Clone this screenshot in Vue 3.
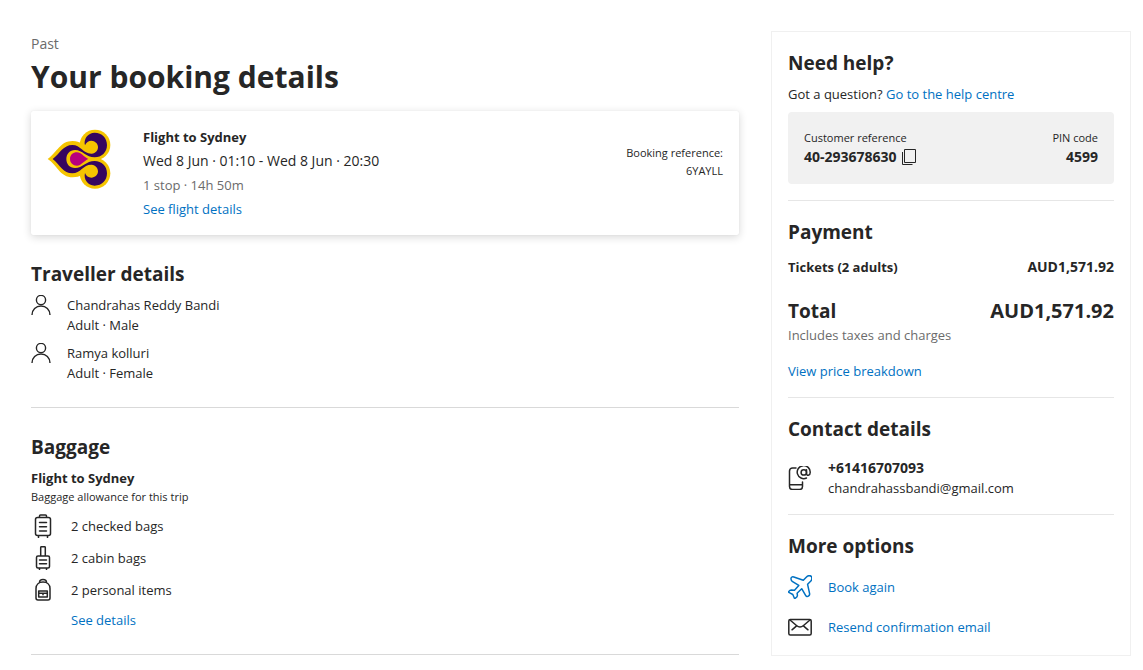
<template>
    <div class="page">
        <main class="main">
            <p class="muted status">Past</p>
            <h1>Your booking details</h1>

            <section class="flight-card">
                <svg class="airline" viewBox="21 21 192 192" aria-hidden="true">
                    <g fill="#f5c400">
                        <path d="M23 117C52 97 60 63 98 63c12 0 20 3 26 7h50v96h-50c-6 4-14 6-26 6-38 0-46-36-75-55z" />
                        <circle cx="165" cy="75" r="46" />
                        <circle cx="165" cy="160" r="46" />
                    </g>
                    <path
                        fill="#35055f"
                        d="M38 117C60 100 70 75 97 75c25 0 33 27 58 26 12-1 19-10 19-20s-9-19-20-19c-8 0-16 5-19 14-5-18 8-38 29-38 22 0 37 16 37 37 0 22-16 37-37 37-26 0-36-22-59-22-16 0-26 12-26 27s10 27 26 27c23 0 33-21 59-21 21 0 37 15 37 37 0 21-15 37-37 37-21 0-34-20-29-38 3 9 11 14 19 14 11 0 20-9 20-19s-7-19-19-20c-25-1-33 26-58 26-27 0-37-25-59-43z"
                    />
                    <path fill="#b8007d" d="M90 117c0-12 9-20 21-20 13 0 20 14 34 20-14 6-21 20-34 20-12 0-21-8-21-20z" />
                </svg>
                <div class="flight-info">
                    <h3>Flight to Sydney</h3>
                    <p class="number">Wed 8 Jun · 01:10 - Wed 8 Jun · 20:30</p>
                    <p class="muted">1 stop · 14h 50m</p>
                    <a href="#">See flight details</a>
                </div>
                <div class="booking-ref small">
                    <div>Booking reference:</div>
                    <div>6YAYLL</div>
                </div>
            </section>

            <section class="travellers">
                <h2>Traveller details</h2>
                <ul>
                    <li v-for="person in travellers" :key="person.name">
                        <svg class="person" viewBox="0 0 20 20" aria-hidden="true">
                            <circle cx="10" cy="5" r="4.6" />
                            <path d="M1 20c0-5.500 4-9 9-9s9 3.500 9 9" />
                        </svg>
                        <div>
                            <div>{{ person.name }}</div>
                            <div>{{ person.type }} · {{ person.gender }}</div>
                        </div>
                    </li>
                </ul>
            </section>

            <section class="baggage">
                <h2>Baggage</h2>
                <h3>Flight to Sydney</h3>
                <p class="small">Baggage allowance for this trip</p>
                <ul>
                    <li v-for="bag in bags" :key="bag.label">
                        <svg class="icon" viewBox="0 0 24 24" aria-hidden="true">
                            <path :d="bag.icon" />
                        </svg>
                        <span>{{ bag.label }}</span>
                    </li>
                </ul>
                <a class="bag-link" href="#">See details</a>
            </section>
        </main>

        <aside class="sidebar">
            <section>
                <h2>Need help?</h2>
                <p class="question">Got a question? <a href="#">Go to the help centre</a></p>
                <div class="reference-box">
                    <div>
                        <div class="small">Customer reference</div>
                        <div class="customer-number">
                            <strong class="number">40-293678630</strong>
                            <button type="button" aria-label="Copy customer reference">
                                <svg class="copy" viewBox="0 0 14 16" aria-hidden="true">
                                    <path d="M2.500.5h11v13h-11zM.5 3v12.500h10" />
                                </svg>
                            </button>
                        </div>
                    </div>
                    <div class="pin">
                        <div class="small">PIN code</div>
                        <strong class="number">4599</strong>
                    </div>
                </div>
            </section>

            <section>
                <h2>Payment</h2>
                <div class="price-row tickets">
                    <strong>Tickets (2 adults)</strong>
                    <strong class="number">AUD1,571.92</strong>
                </div>
                <div class="price-row total">
                    <strong>Total</strong>
                    <strong class="total-amount">AUD1,571.92</strong>
                </div>
                <p class="muted">Includes taxes and charges</p>
                <a class="breakdown" href="#">View price breakdown</a>
            </section>

            <section>
                <h2>Contact details</h2>
                <div class="contact">
                    <svg class="icon" viewBox="0 0 24 24" aria-hidden="true">
                        <path d="M8 2H4.500a3 3 0 0 0-3 3v15.500a3 3 0 0 0 3 3h7a3 3 0 0 0 3-3V16M1.500 18.700h13" />
                        <path d="M18.500 12a6.500 6.500 0 1 1 3.700-5.500c0 3.300-3.700 3.800-3.700 1V3.800" />
                        <circle cx="15.800" cy="6.400" r="2.700" />
                    </svg>
                    <div>
                        <strong class="number">+61416707093</strong>
                        <div>chandrahassbandi@gmail.com</div>
                    </div>
                </div>
            </section>

            <section>
                <h2>More options</h2>
                <ul class="options">
                    <li>
                        <svg class="icon icon-blue" viewBox="0 0 24 24" aria-hidden="true">
                            <path d="M18.500 1.900 15.300 5.200 5.800 2C4 1.500 2.800 2.500 3 4c.1 1 .4 1.800 1.200 2.300l6.600 4.100-4.300 4.900-3.300-.3c-1 0-1.700.5-2.300 1.400-.4.700-.2 1 .4 1.300l3.500 1.800 1.400 3.300c.3.600.7.800 1.200.4 1.400-.9 2.200-1.600 2-3l-.3-2 4.600-4.500 3.900 6.600c.7 1.200 1.700 1.500 2.800.8 1-.6 1.400-1.400 1.200-2.500l-2-9.300 3-3c1.400-1.500 1.300-3.800.7-4.900-1-1.100-3.300-1.100-4.800.5z" />
                        </svg>
                        <a href="#">Book again</a>
                    </li>
                    <li>
                        <svg class="icon" viewBox="0 0 24 24" aria-hidden="true">
                            <rect x=".8" y="4.500" width="22.400" height="15.500" rx="1.500" />
                            <path d="m2 5 6.500 5.500c2 1.700 5 1.700 7 0L22 5M4 14.800l4.300-3.600M20 14.800l-4.300-3.600" />
                        </svg>
                        <a href="#">Resend confirmation email</a>
                    </li>
                </ul>
            </section>
        </aside>
    </div>
</template>

<script setup>
const travellers = [
    { name: 'Chandrahas Reddy Bandi', type: 'Adult', gender: 'Male' },
    { name: 'Ramya kolluri',          type: 'Adult', gender: 'Female' },
];

const bags = [
    {
        label: '2 checked bags',
        icon: 'M6.500 3.500h11a2 2 0 0 1 2 2v14a2 2 0 0 1-2 2h-11a2 2 0 0 1-2-2v-14a2 2 0 0 1 2-2zM8.500 3.500V2a1 1 0 0 1 1-1h5a1 1 0 0 1 1 1v1.500M8.500 8.500h7M8.500 12.800h7M8.500 17h7M7.500 21.500v2M16.500 21.500v2',
    },
    {
        label: '2 cabin bags',
        icon: 'M7 10h10a1.500 1.500 0 0 1 1.500 1.500v9A1.500 1.500 0 0 1 17 22H7a1.500 1.500 0 0 1-1.500-1.500v-9A1.500 1.500 0 0 1 7 10zM9.700 10V1.500a.8.800 0 0 1 .8-.8h3a.8.800 0 0 1 .8.800V10M8.500 14h7M8.500 17.800h7M8.500 22v1.500M15.500 22v1.500',
    },
    {
        label: '2 personal items',
        icon: 'M5 10.500C5 6.500 8 4 12 4s7 2.500 7 6.500v9.500a2 2 0 0 1-2 2H7a2 2 0 0 1-2-2zM8.500 4.500C8.500 2.500 10 1.500 12 1.500s3.500 1 3.500 3M7.700 13h8.600v6H7.700zM8 15.300h8M12 15.300v1.500',
    },
];
</script>

<style>
body {
    margin: 0;
    background: #fff;
}
</style>

<style scoped>
.page {
    display: grid;
    grid-template-columns: minmax(0, 1fr) 360px;
    align-items: start;
    gap: 32px;
    max-width: 1100px;
    margin: 0 auto;
    padding: 31px 12px 14px 31px;
    color: #262626;
    font-family: "Segoe UI", "Open Sans", "Noto Sans", sans-serif;
    font-size: 13px;
    line-height: 20px;
}
h1, h2, h3, p, ul {
    margin: 0;
    padding: 0;
}
ul { list-style: none; }
h1 {
    margin: 3px 0 14px;
    font-size: 30px;
    line-height: 40px;
    font-weight: 700;
}
h2 {
    font-size: 19px;
    line-height: 28px;
    font-weight: 700;
}
h3 {
    font-size: 13px;
    line-height: 20px;
    font-weight: 700;
}
a {
    color: #0071c2;
    text-decoration: none;
}
strong { font-weight: 700; }
.muted { color: #6b6b6b; }
.small {
    font-size: 11px;
    line-height: 18px;
}
.number { font-size: 14px; }
.status {
    padding-top: 3px;
    font-size: 14px;
}
.icon {
    flex: none;
    width: 24px;
    height: 24px;
    fill: none;
    stroke: #262626;
    stroke-width: 1.5;
    stroke-linecap: round;
    stroke-linejoin: round;
}
.icon-blue { stroke: #0071c2; }

.flight-card {
    display: flex;
    align-items: flex-start;
    padding: 16px;
    border-radius: 2px;
    box-shadow: 0 2px 8px rgba(0, 0, 0, .16), 0 0 1px rgba(0, 0, 0, .1);
}
.airline {
    flex: none;
    width: 64px;
    height: 64px;
    margin-right: 32px;
}
.flight-info {
    display: flex;
    flex: 1;
    flex-direction: column;
    align-items: flex-start;
    gap: 4px;
}
.booking-ref {
    padding-top: 17px;
    text-align: right;
}

.travellers {
    padding: 25px 0 24px;
    border-bottom: 1px solid #d9d9d9;
}
.travellers ul {
    display: grid;
    gap: 8px;
    padding-top: 7px;
}
.travellers li {
    display: flex;
    gap: 16px;
}
.person {
    flex: none;
    width: 20px;
    height: 20px;
    fill: none;
    stroke: #262626;
    stroke-width: 1.4;
}

.baggage {
    padding: 25px 0 24px;
    border-bottom: 1px solid #d9d9d9;
}
.baggage h3 { margin-top: 7px; }
.baggage ul {
    display: grid;
    gap: 8px;
    padding: 8px 0;
}
.baggage li {
    display: flex;
    align-items: center;
    gap: 16px;
}
.bag-link {
    display: block;
    margin-left: 40px;
}

.sidebar {
    padding: 0 16px;
    border: 1px solid #f0f0f0;
}
.sidebar section { padding: 17px 0 16px; }
.sidebar section + section { border-top: 1px solid #e6e6e6; }
.question { margin: 7px 0 8px; }
.reference-box {
    display: flex;
    justify-content: space-between;
    padding: 17px 16px;
    border-radius: 4px;
    background: #f1f1f1;
}
.customer-number {
    display: flex;
    align-items: center;
    gap: 5px;
}
.customer-number button {
    display: flex;
    padding: 0;
    border: 0;
    background: none;
    cursor: pointer;
}
.copy {
    width: 14px;
    height: 16px;
    fill: none;
    stroke: #262626;
}
.pin { text-align: right; }

.price-row {
    display: flex;
    justify-content: space-between;
}
.tickets { padding: 11px 0 20px; }
.total {
    font-size: 19px;
    line-height: 28px;
}
.total-amount { font-size: 20px; }
.breakdown {
    display: block;
    margin-top: 16px;
}
.contact {
    display: flex;
    align-items: center;
    gap: 16px;
    padding-top: 15px;
}
.options {
    display: grid;
    gap: 16px;
    padding-top: 15px;
}
.options li {
    display: flex;
    align-items: center;
    gap: 16px;
}
</style>
